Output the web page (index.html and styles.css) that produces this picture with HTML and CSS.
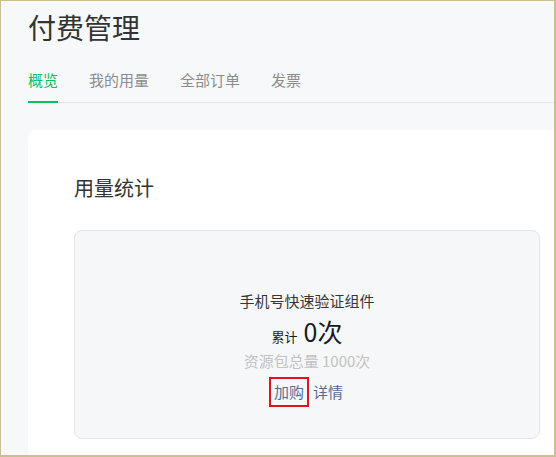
FILE: index.html
```html
<!DOCTYPE html>
<html lang="zh-CN">
<head>
<meta charset="utf-8">
<title>付费管理</title>
<link rel="stylesheet" href="styles.css">
</head>
<body>
<div class="frame">
  <h1 class="title">付费管理</h1>
  <nav class="tabs">
    <a class="tab active">概览</a>
    <a class="tab">我的用量</a>
    <a class="tab">全部订单</a>
    <a class="tab">发票</a>
  </nav>
  <section class="card">
    <h2 class="card-title">用量统计</h2>
    <div class="usage">
      <div class="usage-name">手机号快速验证组件</div>
      <div class="usage-total"><span class="usage-label">累计</span><span class="usage-num">0次</span></div>
      <div class="usage-quota">资源包总量 1000次</div>
      <div class="usage-links"><a class="link link-marked">加购</a><a class="link">详情</a></div>
    </div>
  </section>
</div>
</body>
</html>
```
FILE: styles.css
```css
html, body {
  margin: 0;
  padding: 0;
  background: #ffffff;
}
body {
  font-family: "Noto Sans CJK SC", "Noto Sans", sans-serif;
  color: #333333;
}
.frame {
  width: 556px;
  height: 457px;
  box-sizing: border-box;
  border: 1px solid #c9bf92;
  border-right-width: 2px;
  border-bottom-width: 2px;
  background: #f7f8fa;
  overflow: hidden;
  padding-left: 27px;
}
.title {
  margin: 0;
  padding-top: 6px;
  font-size: 28px;
  line-height: 40px;
  font-weight: 400;
  color: #333333;
}
.tabs {
  margin-top: 22px;
  display: flex;
  gap: 31px;
  border-bottom: 1px solid #e3e4e6;
  width: 600px;
}
.tab {
  position: relative;
  font-size: 15px;
  line-height: 22px;
  padding-bottom: 11px;
  color: #8c8c8c;
  cursor: pointer;
}
.tab.active {
  color: #07c160;
}
.tab.active::after {
  content: "";
  position: absolute;
  left: 0;
  right: 0;
  bottom: -1px;
  height: 2px;
  background: #07c160;
}
.card {
  margin-top: 27px;
  width: 600px;
  background: #ffffff;
  border-radius: 8px;
  padding: 44px 46px 40px;
  box-sizing: border-box;
  height: 400px;
}
.card-title {
  margin: 0;
  font-size: 20px;
  line-height: 28px;
  font-weight: 400;
  color: #333333;
}
.usage {
  margin-top: 28px;
  width: 466px;
  box-sizing: border-box;
  height: 209px;
  background: #f6f7f9;
  border: 1px solid #e3e4e7;
  border-radius: 8px;
  display: flex;
  flex-direction: column;
  align-items: center;
  padding-top: 60px;
}
.usage-name {
  font-size: 15px;
  line-height: 20px;
  color: #353535;
}
.usage-total {
  margin-top: 6px;
  display: flex;
  align-items: baseline;
  gap: 6px;
  line-height: 28px;
}
.usage-label {
  font-size: 13px;
  color: #1a1a1a;
}
.usage-num {
  font-size: 25px;
  color: #1a1a1a;
}
.usage-quota {
  font-size: 15px;
  line-height: 20px;
  color: #c2c2c2;
}
.usage-links {
  margin-top: 8px;
  display: flex;
  gap: 6px;
  align-items: center;
}
.link {
  font-size: 15px;
  line-height: 22px;
  color: #576b95;
  cursor: pointer;
}
.link-marked {
  outline: 2px solid #e0141e;
  outline-offset: 0;
  padding: 2px 3px;
}
```
